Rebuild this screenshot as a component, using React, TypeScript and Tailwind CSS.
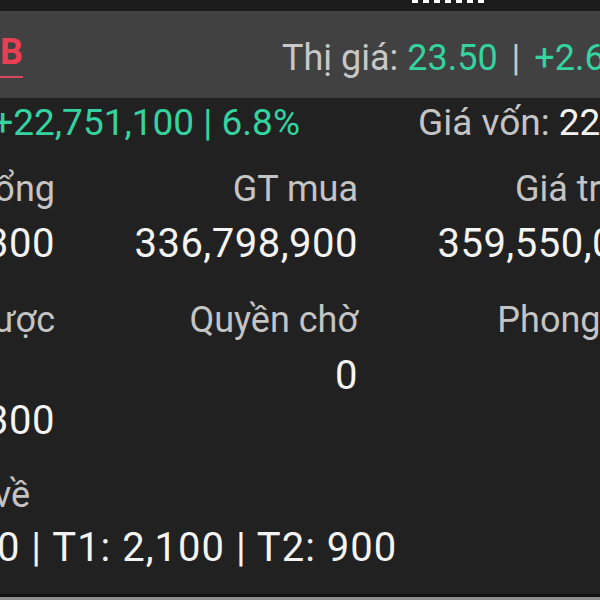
import React from "react";

const green = "text-[#34d3a0]";

function Cell({
  label,
  value,
  valueClass = "mt-[9px]",
}: {
  label: string;
  value?: string;
  valueClass?: string;
}) {
  return (
    <div className="flex flex-col items-end">
      <div className="whitespace-nowrap text-[36px] leading-[44px] text-[#c4c4c4]">{label}</div>
      {value !== undefined && (
        <div
          className={`whitespace-nowrap text-[40px] leading-[48px] tracking-[0.5px] text-[#f4f4f4] ${valueClass}`}
        >
          {value}
        </div>
      )}
    </div>
  );
}

export default function App() {
  return (
    <div className="flex h-[600px] w-[600px] flex-col overflow-hidden bg-[#212121] font-[Roboto,sans-serif]">
      {/* status strip */}
      <div className="flex h-[11px] shrink-0 items-start gap-[5px] bg-[#1c1c1c] pl-[412px]">
        {Array.from({ length: 7 }).map((_, i) => (
          <div key={i} className="h-[3px] w-[6px] bg-white" />
        ))}
      </div>

      {/* header */}
      <div className="flex h-[87px] shrink-0 items-start bg-[#414141]">
        <div className="mt-[21px] flex w-[23px] justify-end">
          <span className="block whitespace-nowrap border-b-2 border-[#d9475a] pb-[4px] text-[36px] font-bold leading-[40px] text-[#ea3f52]">
            VIB
          </span>
        </div>
        <div className="ml-[259px] mt-[27px] whitespace-nowrap text-[36px] leading-[40px] text-[#c8c8c8]">
          Thị giá: <span className={green}>23.50</span>
          <span className="mx-[5px]"> | </span>
          <span className={green}>+2.60%</span>
        </div>
      </div>

      {/* profit row */}
      <div className="flex h-[50px] shrink-0 items-start text-[37px] leading-[50px]">
        <div className="flex w-[300px] justify-end">
          <span className={`whitespace-nowrap ${green}`}>+22,751,100 | 6.8%</span>
        </div>
        <div className="ml-[118px] whitespace-nowrap text-[#c4c4c4]">
          Giá vốn: <span className="text-[#f4f4f4]">22.01</span>
        </div>
      </div>

      {/* stats grid */}
      <div className="-ml-[250px] grid w-[911px] shrink-0 grid-cols-[305px_303px_303px] gap-y-[30px] pt-[19px]">
        <Cell label="Tổng" value="696,349,300" />
        <Cell label="GT mua" value="336,798,900" />
        <Cell label="Giá trị TT" value="359,550,000" />
        <Cell label="Được" value="1,300" valueClass="mt-[55px]" />
        <Cell label="Quyền chờ" value="0" valueClass="mt-[10px]" />
        <Cell label="Phong tỏa" value="0" valueClass="mt-[10px]" />
      </div>

      {/* pending */}
      <div className="-ml-[79px] mt-[28px] whitespace-nowrap text-[36px] leading-[44px] text-[#c4c4c4]">
        Chờ về
      </div>
      <div className="-ml-[73px] mt-[7px] whitespace-nowrap text-[40px] leading-[48px] tracking-[1px] text-[#f4f4f4]">
        T0: 0 | T1: 2,100 | T2: 900
      </div>

      <div className="mt-auto h-[3px] shrink-0 bg-[#131313]" />
      <div className="h-[3px] shrink-0 bg-[#8e8e8e]" />
    </div>
  );
}
